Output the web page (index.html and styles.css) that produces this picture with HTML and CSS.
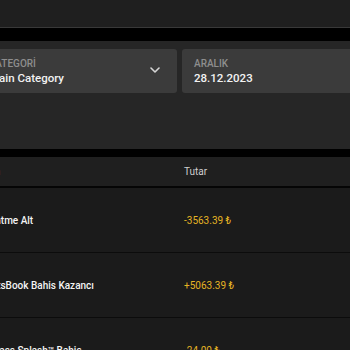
FILE: index.html
```html
<!DOCTYPE html>
<html lang="tr">

<head>
    <meta charset="UTF-8">
    <meta name="viewport" content="width=device-width, initial-scale=1.0">
    <title>İşlem Geçmişi</title>
    <link rel="stylesheet" href="styles.css">
</head>

<body>
    <div class="topbar"></div>
    <div class="gap"></div>

    <div class="filters">
        <div class="field field-select">
            <div class="field-text">
                <span class="field-label">Kategori</span>
                <span class="field-value">Main Category</span>
            </div>
            <svg class="chevron" width="10" height="6" viewBox="0 0 10 6">
                <path d="M1 1 L5 5 L9 1" fill="none" stroke="#d6d6d6" stroke-width="1.6" stroke-linecap="round" stroke-linejoin="round" />
            </svg>
        </div>
        <div class="field">
            <div class="field-text">
                <span class="field-label">Aralık</span>
                <span class="field-value">28.12.2023</span>
            </div>
        </div>
    </div>

    <div class="gap gap-small"></div>

    <div class="history">
        <div class="history-head">
            <div>İşlem</div>
            <div>Tutar</div>
        </div>
        <div class="history-row">
            <div class="desc">Kesintme Alt</div>
            <div class="amount">-3563.39 ₺</div>
        </div>
        <div class="history-row">
            <div class="desc">SportsBook Bahis Kazancı</div>
            <div class="amount">+5063.39 ₺</div>
        </div>
        <div class="history-row">
            <div class="desc">Big Bass Splash™ Bahis</div>
            <div class="amount">-24.00 ₺</div>
        </div>
    </div>
</body>

</html>
```

FILE: styles.css
```css
body {
    margin: 0;
    padding: 0;
    background-color: #1c1c1c;
    font-family: Roboto, "Liberation Sans", sans-serif;
    color: #ffffff;
    overflow: hidden;
}

.topbar {
    height: 27px;
    background-color: #1f1f1f;
    border-bottom: 1px solid #393939;
}

.gap {
    height: 13px;
    background-color: #000000;
}

.gap-small {
    height: 8px;
}

/* filter panel */
.filters {
    display: flex;
    gap: 5px;
    height: 108px;
    padding-top: 8px;
    margin-left: -23px;
    background-color: #262626;
    box-sizing: border-box;
}

.field {
    display: flex;
    align-items: center;
    width: 220px;
    height: 44px;
    padding: 0 12px;
    background-color: #3b3b3b;
    border-radius: 3px;
    box-sizing: border-box;
    flex-shrink: 0;
}

.field-select {
    width: 200px;
    padding-right: 17px;
}

.field-text {
    display: flex;
    flex-direction: column;
    flex: 1;
    padding-top: 1px;
}

.field-label {
    font-size: 10px;
    line-height: 13px;
    text-transform: uppercase;
    color: #8e8e8e;
    font-weight: 500;
}

.field-value {
    font-size: 11.5px;
    line-height: 16px;
    font-weight: 500;
    color: #f2f2f2;
}

.chevron {
    margin-bottom: 2px;
}

/* history table */
.history {
    margin-left: -24px;
}

.history-head,
.history-row {
    display: grid;
    grid-template-columns: 208px 1fr;
    align-items: center;
}

.history-head {
    height: 29px;
    background-color: #1f1f1f;
    border-bottom: 2px solid #050505;
    font-size: 10px;
    color: #cfcfcf;
}

.history-row {
    height: 64px;
    background-color: #1b1b1b;
    border-bottom: 1px solid #0c0c0c;
    font-size: 10px;
}

.desc {
    font-weight: 500;
    color: #f4f4f4;
}

.amount {
    color: #e5b424;
}
```
